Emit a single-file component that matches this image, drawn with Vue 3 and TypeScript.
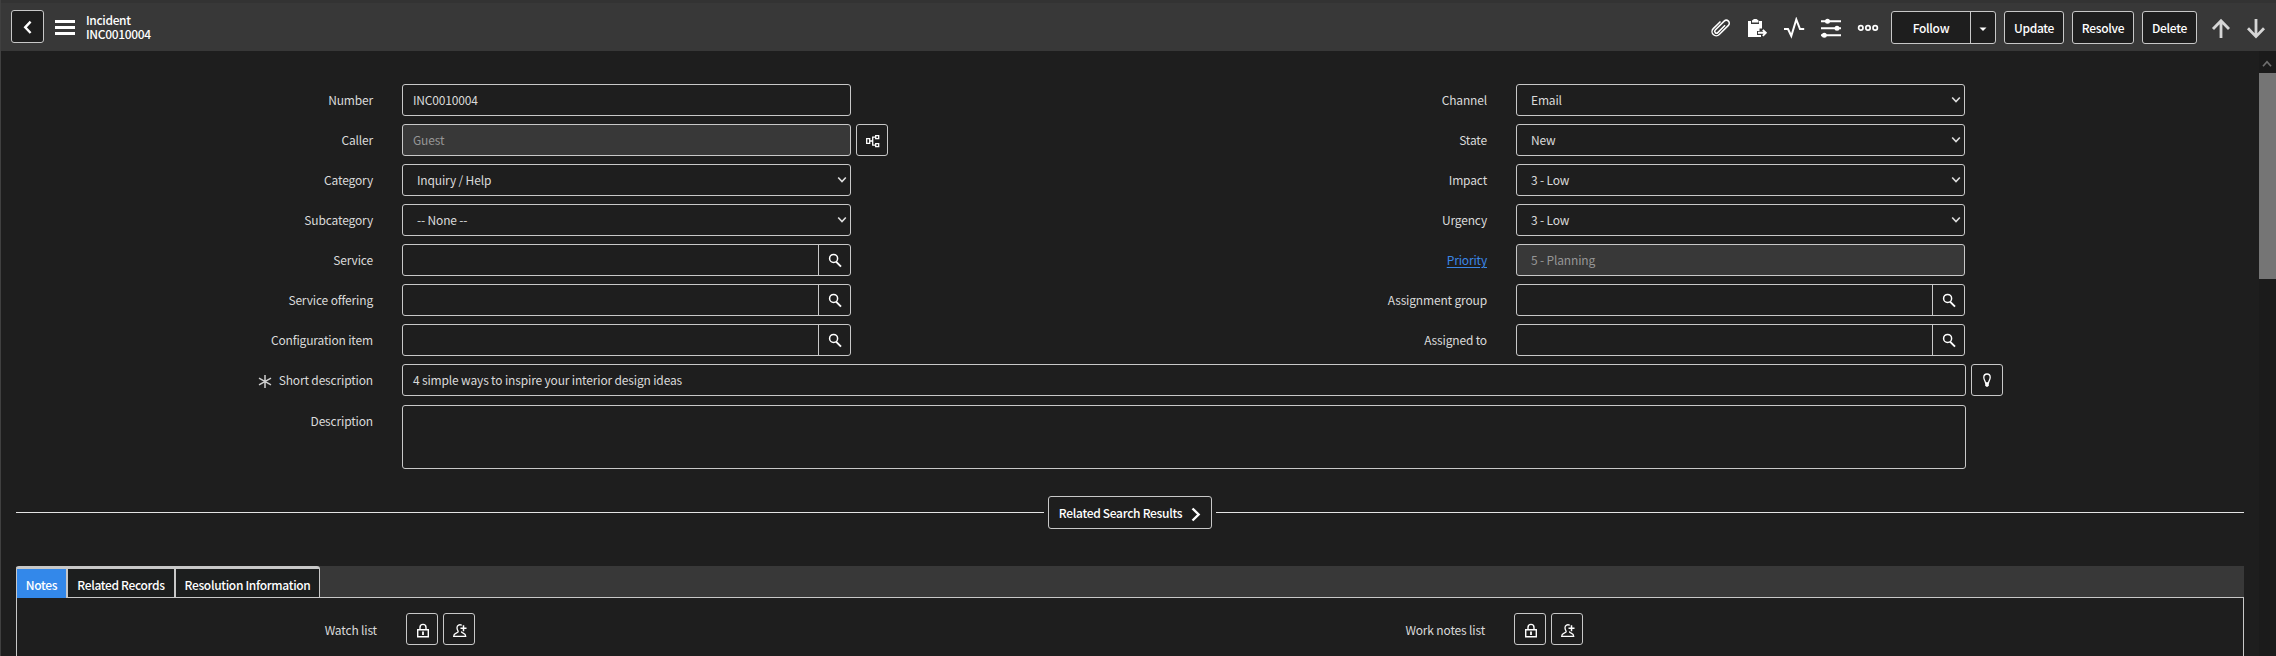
<script setup lang="ts">
interface Field {
  label: string
  kind: 'text' | 'select' | 'lookup'
  value?: string
  disabled?: boolean
  link?: boolean
  tree?: boolean
}

const leftFields: Field[] = [
  { label: 'Number', kind: 'text', value: 'INC0010004' },
  { label: 'Caller', kind: 'text', value: 'Guest', disabled: true, tree: true },
  { label: 'Category', kind: 'select', value: 'Inquiry / Help' },
  { label: 'Subcategory', kind: 'select', value: '-- None --' },
  { label: 'Service', kind: 'lookup' },
  { label: 'Service offering', kind: 'lookup' },
  { label: 'Configuration item', kind: 'lookup' },
]
const rightFields: Field[] = [
  { label: 'Channel', kind: 'select', value: 'Email' },
  { label: 'State', kind: 'select', value: 'New' },
  { label: 'Impact', kind: 'select', value: '3 - Low' },
  { label: 'Urgency', kind: 'select', value: '3 - Low' },
  { label: 'Priority', kind: 'select', value: '5 - Planning', disabled: true, link: true },
  { label: 'Assignment group', kind: 'lookup' },
  { label: 'Assigned to', kind: 'lookup' },
]
const columns = [leftFields, rightFields]
const lists = ['Watch list', 'Work notes list']
const tabs = ['Notes', 'Related Records', 'Resolution Information']
const actions = ['Update', 'Resolve', 'Delete']
</script>

<template>
  <div class="page">
    <header class="bar">
      <button class="btn back">
        <svg width="33" height="33" viewBox="0 0 33 33"><path d="M19.600 11.600 14.200 17.300l5.400 5.700" class="s" stroke-width="2.400" /></svg>
      </button>
      <div class="burger"><i /><i /><i /></div>
      <div class="title"><span>Incident</span><span>INC0010004</span></div>
      <div class="icons">
        <svg width="22" height="22" viewBox="0 0 22 22"><path transform="rotate(45 11 11)" d="M6.700 6v10.200a4.200 4.200 0 0 0 8.400 0V3.200a3 3 0 0 0-6 0v12.600a1.800 1.800 0 0 0 3.600 0V5.500" class="s" stroke-width="1.500" /></svg>
        <svg width="22" height="22" viewBox="0 0 22 22"><path d="M2 4h3v3h8V4h3v7.500h-2.500V14H11v4h4v2H2z" fill="#fff" /><path d="M6 5.500V3.500L8 2h2.500l2 1.500v2z" fill="#fff" /><path d="M12 15.800h7M16.800 12.800l3 3-3 3" class="s" stroke-width="1.900" /></svg>
        <svg width="22" height="22" viewBox="0 0 22 22"><path d="M1 12h4l3.300 7L13.300 2.500l3.700 9.500h4.200" class="s" stroke-width="2" /></svg>
        <svg width="22" height="22" viewBox="0 0 22 22"><path d="M1 4.300h20M1 11.300h20M1 18.300h20" class="s" stroke-width="1.900" /><g fill="#fff"><circle cx="7.500" cy="4.300" r="2.500" /><circle cx="17" cy="11.300" r="2.500" /><circle cx="4.300" cy="18.300" r="2.500" /></g></svg>
        <svg width="22" height="22" viewBox="0 0 22 22"><g class="s" stroke-width="1.700"><circle cx="3.800" cy="10.900" r="2.200" /><circle cx="11" cy="10.900" r="2.200" /><circle cx="18.200" cy="10.900" r="2.200" /></g></svg>
      </div>
      <div class="btn follow">
        <span>Follow</span>
        <i><svg width="24" height="31" viewBox="0 0 24 31"><path d="M8.500 15.500h7l-3.500 3.600z" fill="#fff" /></svg></i>
      </div>
      <button v-for="a in actions" :key="a" class="btn act" :class="a.toLowerCase()">{{ a }}</button>
      <div class="arrows">
        <svg width="20" height="22" viewBox="0 0 20 22"><path d="M10 20V3M2 11l8-8.300 8 8.300" class="a" /></svg>
        <svg width="20" height="22" viewBox="0 0 20 22"><path d="M10 1v17M2 10.300l8 8.300 8-8.300" class="a" /></svg>
      </div>
    </header>

    <div class="body">
      <main class="content">
        <section class="columns">
          <div v-for="(col, ci) in columns" :key="ci" class="column">
            <div v-for="f in col" :key="f.label" class="row">
              <label :class="{ link: f.link }">{{ f.label }}</label>
              <div class="field" :class="[f.kind, { disabled: f.disabled }]">
                <span>{{ f.value }}</span>
                <svg v-if="f.kind === 'select' && !f.disabled" class="chev" width="10" height="8" viewBox="0 0 10 8"><path d="M1.200 1.500 5 5.600l3.800-4.100" fill="none" stroke="#ddd" stroke-width="1.600" /></svg>
                <i v-if="f.kind === 'lookup'" class="mag"><svg width="16" height="16" viewBox="0 0 16 16"><circle cx="6.600" cy="6.400" r="4" class="s" stroke-width="1.500" /><path d="M9 9.600l5 5" class="s" stroke-width="2" /></svg></i>
              </div>
              <div v-if="f.tree" class="btn sq tree">
                <svg width="16" height="16" viewBox="0 0 16 16"><path d="M1.700 5.700h3v4.600h-3zM10.700 2.700h3v3h-3zM10.700 10.700h3v3h-3zM5 8h2.700M10.500 4.200H7.700v8h3" class="s" stroke-width="1.300" /></svg>
              </div>
            </div>
          </div>
        </section>

        <div class="row wide">
          <label><svg class="star" width="14" height="15" viewBox="0 0 14 15"><path d="M7 1v13M1 4.200l12 6.600M13 4.200 1 10.800" stroke="#cfcfcf" stroke-width="1.500" fill="none" /></svg>Short description</label>
          <div class="field long"><span>4 simple ways to inspire your interior design ideas</span></div>
          <div class="btn sq bulb">
            <svg width="14" height="18" viewBox="0 0 14 18"><path d="M5.600 12C5.200 10 3.800 8.800 3.800 6.200a3.200 3.200 0 0 1 6.400 0c0 2.600-1.400 3.800-1.800 5.800z" class="s" stroke-width="1.300" /><path d="M5.200 11.700h3.600v2.800l-1 1.300H6.200l-1-1.300z" fill="#fff" /></svg>
          </div>
        </div>
        <div class="row wide desc">
          <label>Description</label>
          <div class="field long area" />
        </div>

        <div class="related">
          <hr />
          <div class="btn rel">
            <span>Related Search Results</span>
            <svg width="10" height="15" viewBox="0 0 10 15"><path d="M1.500 1.500 7.600 7.500l-6.100 6" class="s" stroke-width="2.400" /></svg>
          </div>
          <hr />
        </div>

        <nav class="tabs">
          <div v-for="(t, i) in tabs" :key="t" class="tab" :class="['t' + i]">{{ t }}</div>
        </nav>
        <section class="panel">
          <div v-for="l in lists" :key="l" class="list">
            <label>{{ l }}</label>
            <div class="btn sm">
              <svg width="16" height="16" viewBox="0 0 16 16"><path d="M2.700 6.700h10.600v7H2.700zM5 6.500V4.400a3 3 0 0 1 6 0v2.100" class="s" stroke-width="1.400" /><path d="M8 8.500V12" class="s" stroke-width="1.800" /></svg>
            </div>
            <div class="btn sm">
              <svg width="16" height="16" viewBox="0 0 16 16"><path d="M9.800 2.300C7.500 1 5 2.200 5 4.800c0 1.800.9 2.600 1.200 3.600.2 1-.7 1.200-2 1.700-1.800.7-2.500 1.500-2.500 3.200h12c0-1.700-.8-2.500-2.500-3.200-1.300-.5-2-.8-1.700-1.700" class="s" stroke-width="1.300" /><path d="M11.500 2.300v6M8.500 5.300h6" class="s" stroke-width="1.500" /></svg>
            </div>
          </div>
        </section>
      </main>
      <aside class="scroll">
        <svg width="16" height="22" viewBox="0 0 16 22"><path d="M4 15.200 8 10.800l4 4.400" fill="none" stroke="#6f6f6f" stroke-width="1.700" /></svg>
        <div class="thumb" />
      </aside>
    </div>
  </div>
</template>

<style>
html,
body {
  margin: 0;
  background: #1e1e1e;
  overflow: hidden;
}
</style>

<style scoped>
* {
  box-sizing: border-box;
}
.page {
  width: 2276px;
  height: 656px;
  overflow: hidden;
  display: flex;
  flex-direction: column;
  background: #1e1e1e;
  border-left: 1px solid #404040;
  color: #dadada;
  font: 12px/18px 'Noto Sans CJK SC', sans-serif;
  letter-spacing: -0.16px;
}
svg {
  display: block;
  flex: none;
}
.s {
  fill: none;
  stroke: #fff;
}
.a {
  fill: none;
  stroke: #d6d6d6;
  stroke-width: 2.8;
}
.btn {
  border: 1px solid #c8c8c8;
  border-radius: 3px;
  background: #1e1e1e;
  color: #fff;
  font: 500 12px/18px 'Noto Sans CJK SC', sans-serif;
  letter-spacing: -0.3px;
  display: flex;
  align-items: center;
  justify-content: center;
  padding: 0;
  white-space: nowrap;
  flex: none;
}
.bar {
  height: 51px;
  flex: none;
  background: #383838;
  border-top: 3px solid #333;
  display: flex;
  align-items: flex-start;
  padding-left: 10px;
}
.back {
  width: 33px;
  height: 33px;
  margin-top: 7px;
}
.burger {
  width: 20px;
  margin: 17px 11px 0;
  display: grid;
  gap: 3px;
}
.burger i {
  height: 3px;
  background: #fff;
}
.title {
  display: flex;
  flex-direction: column;
  margin-top: 10px;
  color: #fff;
  font-weight: 500;
  line-height: 14px;
  letter-spacing: -0.35px;
  width: 1622px;
}
.icons {
  display: flex;
  gap: 15px;
  margin-top: 14px;
  padding-left: 1px;
  width: 183px;
}
.follow {
  width: 105px;
  height: 33px;
  margin-top: 8px;
  margin-right: 8px;
}
.follow span {
  flex: 1;
  text-align: center;
}
.follow i {
  border-left: 1px solid #c8c8c8;
}
.act {
  height: 33px;
  margin-top: 8px;
  margin-right: 8px;
}
.update {
  width: 60px;
}
.resolve {
  width: 62px;
}
.delete {
  width: 55px;
}
.arrows {
  display: flex;
  gap: 15px;
  margin: 15px 0 0 6px;
}
.body {
  flex: 1;
  min-height: 0;
  display: flex;
}
.content {
  width: 2258px;
  flex: none;
  padding-top: 33px;
}
.columns {
  display: grid;
  grid-template-columns: 1114px 1fr;
}
.column {
  display: grid;
  gap: 8px;
}
.row {
  display: flex;
  height: 32px;
}
.row label {
  width: 372px;
  margin-right: 29px;
  flex: none;
  display: flex;
  justify-content: flex-end;
  line-height: 32px;
  white-space: nowrap;
}
.row .link {
  color: #3b86e6;
  text-decoration: underline;
  text-underline-offset: 2px;
}
.star {
  margin: 10px 7px 0 0;
}
.field {
  width: 449px;
  height: 32px;
  border: 1px solid #c8c8c8;
  border-radius: 3px;
  display: flex;
  align-items: center;
  padding-left: 10px;
}
.select {
  padding-left: 14px;
}
.field span {
  flex: 1;
}
.disabled {
  background: #383838;
  color: #969696;
}
.chev {
  margin-right: 3px;
}
.mag {
  width: 32px;
  height: 30px;
  border-left: 1px solid #c8c8c8;
  display: grid;
  place-items: center;
}
.sq {
  width: 32px;
  height: 32px;
  margin-left: 5px;
}
.tree {
  padding: 1px 0 0 2px;
}
.wide {
  margin-top: 8px;
}
.long {
  width: 1564px;
}
.desc {
  margin-top: 9px;
  height: 64px;
}
.desc label {
  line-height: 31px;
}
.area {
  height: 64px;
}
.related {
  margin: 27px 0 0 15px;
  width: 2228px;
  display: flex;
  align-items: center;
  gap: 4px;
}
.related hr {
  flex: 1;
  height: 1px;
  border: 0;
  margin: 0;
  background: #e4e4e4;
}
.rel {
  width: 164px;
  height: 33px;
  gap: 9px;
}
.rel svg {
  margin-top: 3px;
}
.tabs {
  margin: 37px 0 0 15px;
  width: 2228px;
  height: 32px;
  display: flex;
  background: #383838;
  border-bottom: 1px solid #c8c8c8;
}
.tab {
  height: 31px;
  border: solid #c8c8c8;
  border-width: 3px 1px 0;
  background: #1c1e1e;
  color: #fff;
  font-weight: 500;
  letter-spacing: -0.32px;
  line-height: 31px;
  text-align: center;
  white-space: nowrap;
}
.t0 {
  width: 51px;
  height: 32px;
  background: #3388ea;
  border-radius: 3px 0 0;
}
.t1 {
  width: 108px;
}
.t2 {
  width: 145px;
  border-radius: 0 3px 0 0;
}
.panel {
  margin-left: 15px;
  width: 2228px;
  height: 80px;
  border: solid #c8c8c8;
  border-width: 0 1px;
  display: flex;
  padding-top: 15px;
}
.list {
  width: 1108px;
  display: flex;
  gap: 5px;
}
.list label {
  width: 360px;
  margin-right: 24px;
  text-align: right;
  line-height: 33px;
}
.sm {
  width: 32px;
  height: 32px;
}
.sm svg {
  margin: 3px 0 0 2px;
}
.scroll {
  flex: 1;
  background: #1b1b1b;
}
.thumb {
  height: 206px;
  background: #757575;
}
</style>
